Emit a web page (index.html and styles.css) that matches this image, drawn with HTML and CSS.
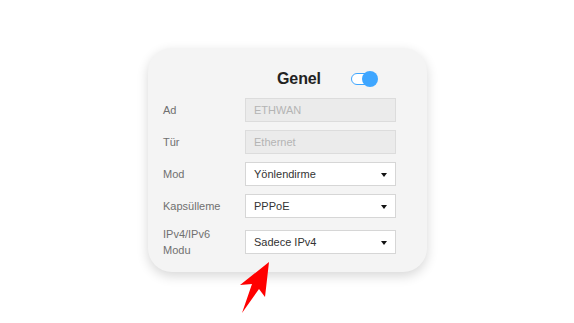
FILE: index.html
```html
<!DOCTYPE html>
<html lang="tr">
<head>
<meta charset="utf-8">
<link rel="stylesheet" href="styles.css">
</head>
<body>
<div class="stage">
  <div class="card">
    <div class="header">
      <span class="title">Genel</span>
      <span class="toggle"><span class="track"></span><span class="knob"></span></span>
    </div>
    <div class="form">
      <div class="label">Ad</div>
      <div class="field disabled">ETHWAN</div>
      <div class="label">Tür</div>
      <div class="field disabled">Ethernet</div>
      <div class="label">Mod</div>
      <div class="field select">Yönlendirme<span class="caret"></span></div>
      <div class="label">Kapsülleme</div>
      <div class="field select">PPPoE<span class="caret"></span></div>
      <div class="label two">IPv4/IPv6<br>Modu</div>
      <div class="field select">Sadece IPv4<span class="caret"></span></div>
    </div>
  </div>
  <svg class="arrow" width="40" height="60" viewBox="236 258 40 60">
    <polygon points="269,262 240,285 252,284 242,313 259,289 265,297" fill="#ff0000"/>
  </svg>
</div>
</body>
</html>
```
FILE: styles.css
```css
html, body {
  margin: 0;
  padding: 0;
  background: #ffffff;
  font-family: "Liberation Sans", Arial, sans-serif;
}
.stage {
  position: relative;
  width: 574px;
  height: 323px;
  padding: 48px 0 0 148px;
  box-sizing: border-box;
}
.card {
  width: 279px;
  height: 224px;
  box-sizing: border-box;
  background: #f4f4f4;
  border-radius: 24px;
  box-shadow: 0 4px 12px rgba(0, 0, 0, 0.16);
  padding: 19px 30px 0 15px;
}
.header {
  display: flex;
  align-items: center;
  height: 24px;
  padding-left: 114px;
  gap: 30px;
  margin-bottom: 7px;
}
.title {
  font-size: 16px;
  font-weight: bold;
  color: #222;
  letter-spacing: -0.1px;
}
.toggle {
  position: relative;
  width: 27px;
  height: 16px;
  display: inline-block;
}
.track {
  position: absolute;
  left: 0;
  top: 2px;
  width: 24px;
  height: 12px;
  box-sizing: border-box;
  border: 1.5px solid #3ea6ff;
  background: #fff;
  border-radius: 6px;
}
.knob {
  position: absolute;
  right: 0;
  top: 0;
  width: 16px;
  height: 16px;
  border-radius: 50%;
  background: #3ea6ff;
}
.form {
  display: grid;
  grid-template-columns: 82px 151px;
  row-gap: 8px;
  align-items: center;
}
.label {
  font-size: 11px;
  color: #707070;
  line-height: 16px;
}
.field {
  position: relative;
  height: 24px;
  box-sizing: border-box;
  border: 1px solid #d6d6d6;
  background: #fff;
  font-size: 11px;
  color: #333;
  line-height: 22px;
  padding-left: 8px;
}
.field.disabled {
  background: #ebebeb;
  color: #b4b4b4;
  border-color: #dcdcdc;
}
.caret {
  position: absolute;
  right: 8px;
  top: 10px;
  width: 0;
  height: 0;
  border-left: 3.5px solid transparent;
  border-right: 3.5px solid transparent;
  border-top: 4px solid #111;
}
.arrow {
  position: absolute;
  left: 236px;
  top: 258px;
}
```
